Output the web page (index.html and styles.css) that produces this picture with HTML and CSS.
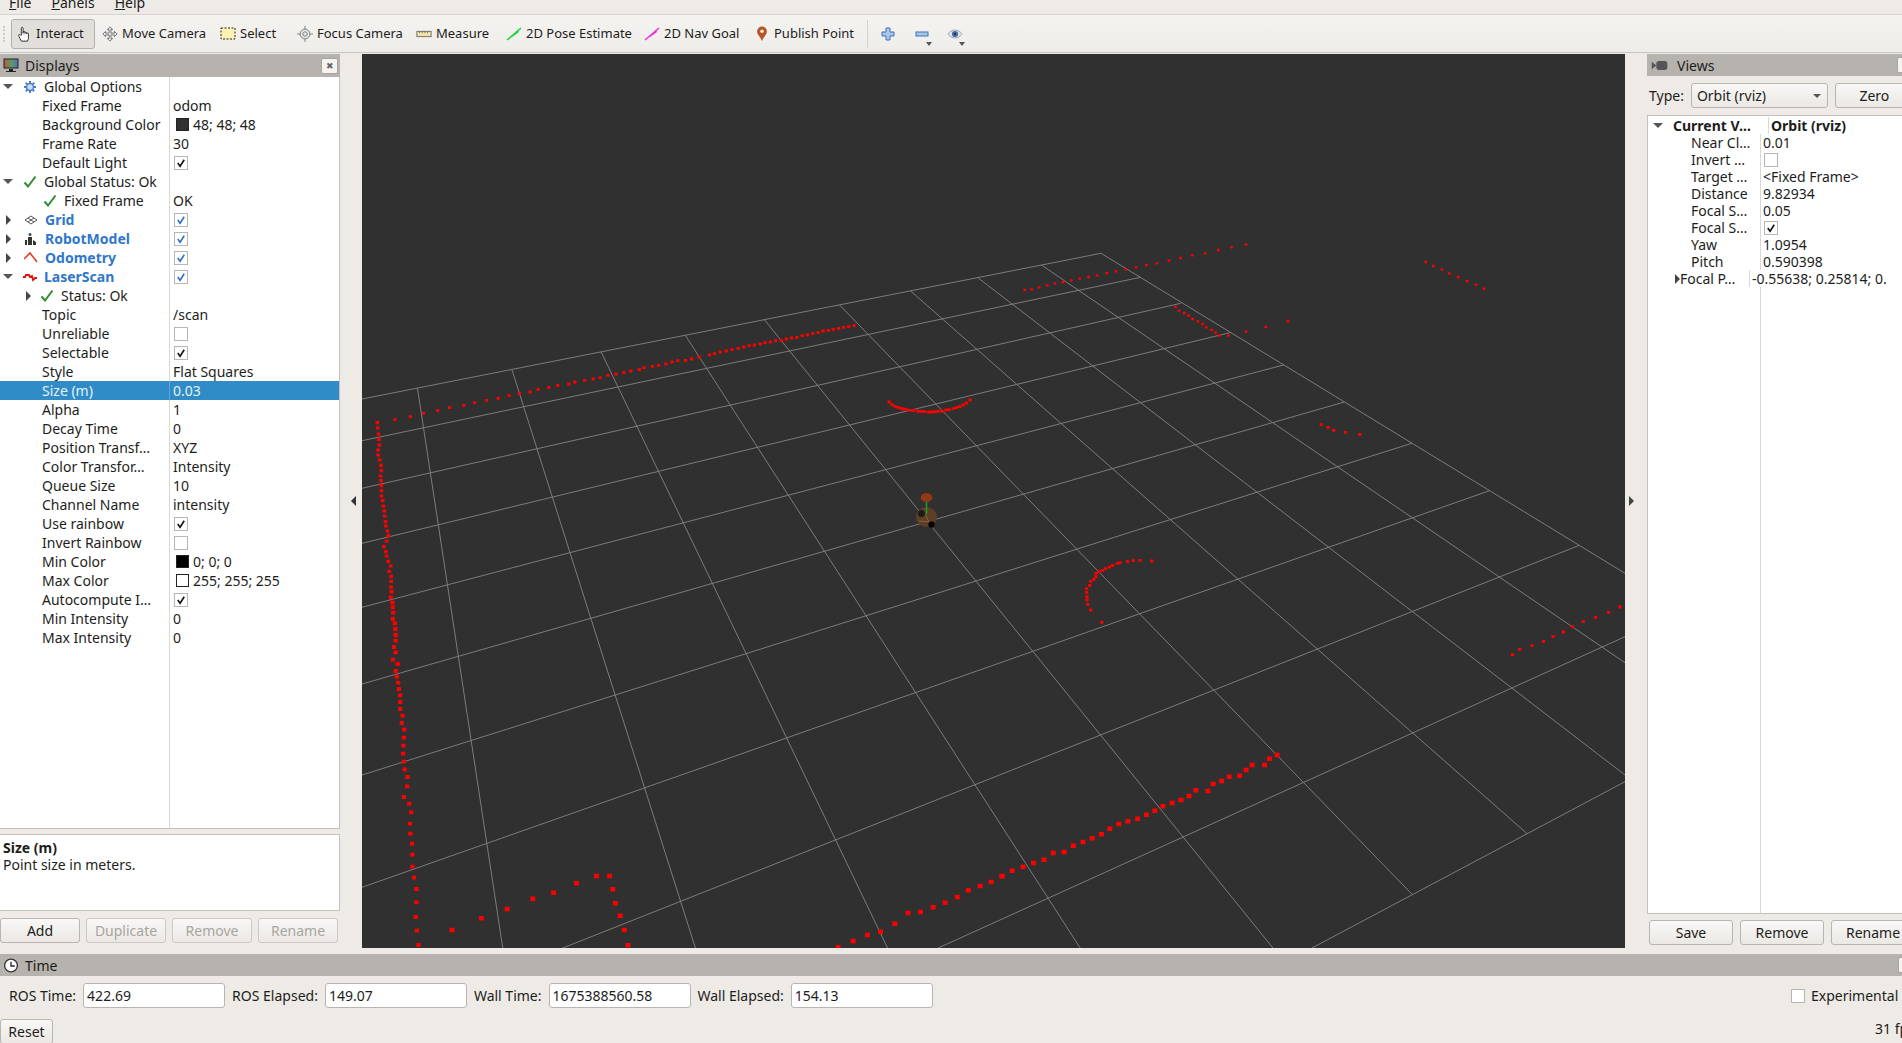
FILE: index.html
```html
<!DOCTYPE html>
<html lang="en">
<head>
<meta charset="utf-8">
<title>RViz</title>
<link rel="stylesheet" href="styles.css">
</head>
<body>
<svg class="defs" width="0" height="0" aria-hidden="true">
  <defs>
    <symbol id="i-check" viewBox="0 0 14 14"><path d="M1.5 7.5l3.5 4L12.5 1.5" fill="none" stroke="#2e8b2e" stroke-width="2"/></symbol>
    <symbol id="i-tick" viewBox="0 0 13 13"><path d="M3 6.5l2.5 3.5L10 3" fill="none" stroke="currentColor" stroke-width="1.7"/></symbol>
  </defs>
</svg>
<div class="app">
  <div class="menubar"><span class="menu"><u>F</u>ile</span><span class="menu"><u>P</u>anels</span><span class="menu"><u>H</u>elp</span></div>

  <div class="toolbar">
    <div class="grip"></div>
    <div class="tool active">
      <svg class="ticon" viewBox="0 0 16 18"><path d="M5 10V2.5a1 1 0 0 1 2 0V8M7 8V7a1 1 0 0 1 2 0v1.500M9 8a1 1 0 0 1 2 0v1M11 9a1 1 0 0 1 2 0v5l-1 3H5l-3-6c-.6-1.400 1-2 2-1l1 1" fill="#fff" stroke="#222" stroke-width="1"/></svg>
      <span>Interact</span></div>
    <div class="tool">
      <svg class="ticon" viewBox="0 0 18 18"><path d="M9 1l3 3h-2v4h4V6l3 3-3 3v-2h-4v4h2l-3 3-3-3h2v-4H4v2L1 9l3-3v2h4V4H6z" fill="#f4f4f2" stroke="#666"/></svg>
      <span>Move Camera</span></div>
    <div class="tool">
      <svg class="ticon" viewBox="0 0 16 16"><rect x="1" y="2" width="14" height="11" fill="#fdf3b0" stroke="#222" stroke-dasharray="2 1.500"/></svg>
      <span>Select</span></div>
    <div class="tool">
      <svg class="ticon" viewBox="0 0 18 18"><path d="M9 0v18M0 9h18" stroke="#777"/><circle cx="9" cy="9" r="5.500" fill="#e6e6e4" stroke="#777"/><circle cx="9" cy="9" r="2.500" fill="none" stroke="#777"/></svg>
      <span>Focus Camera</span></div>
    <div class="tool">
      <svg class="ticon" viewBox="0 0 18 18"><rect x="1" y="6" width="16" height="6" fill="#efe3a8" stroke="#666"/><path d="M4 6v2M7 6v2M10 6v2M13 6v2" stroke="#666"/></svg>
      <span>Measure</span></div>
    <div class="tool">
      <svg class="ticon" viewBox="0 0 16 16"><path d="M1 14L15 2" stroke="#1fd13f" stroke-width="1.500"/><path d="M5 12L12 4l1 2z" fill="#1fd13f"/></svg>
      <span>2D Pose Estimate</span></div>
    <div class="tool">
      <svg class="ticon" viewBox="0 0 16 16"><path d="M1 14L15 2" stroke="#ef2fd8" stroke-width="1.500"/><path d="M5 12L12 4l1 2z" fill="#ef2fd8"/></svg>
      <span>2D Nav Goal</span></div>
    <div class="tool">
      <svg class="ticon" viewBox="0 0 16 18"><path d="M8 17C6 12 2.500 10 2.500 6a5.500 5.500 0 0 1 11 0c0 4-3.500 6-5.500 11z" fill="#b5562a"/><circle cx="8" cy="6" r="2" fill="#f3e3d8"/></svg>
      <span>Publish Point</span></div>
    <div class="tsep"></div>
    <div class="zoomtool">
      <svg class="zicon" viewBox="0 0 14 14"><path d="M5 1h4v4h4v4H9v4H5V9H1V5h4z" fill="#a9c6e8" stroke="#3f74b3"/></svg>
    </div>
    <div class="zoomtool">
      <svg class="zicon" viewBox="0 0 14 14"><rect x="1" y="5" width="12" height="4" fill="#a9c6e8" stroke="#3f74b3"/></svg>
      <span class="drop"></span>
    </div>
    <div class="zoomtool">
      <svg class="zicon" viewBox="0 0 18 14"><path d="M1 7c4-6 12-6 16 0-4 6-12 6-16 0z" fill="#dfe3e8" stroke="#9aa3ad"/><circle cx="9" cy="7" r="3.500" fill="#4a6fa8"/><circle cx="9" cy="7" r="1.300" fill="#1c2c48"/></svg>
      <span class="drop"></span>
    </div>
  </div>

  <div class="main">
    <section class="dock left">
      <header class="dockhead">
        <svg class="dockicon" viewBox="0 0 16 15"><defs><linearGradient id="scr" x1="0" x2="1"><stop offset="0" stop-color="#c0504d"/><stop offset=".5" stop-color="#5aa05a"/><stop offset="1" stop-color="#5a6ac0"/></linearGradient></defs><rect x="1" y="1" width="14" height="9" fill="url(#scr)" stroke="#222"/><path d="M6 11h4v2H6zM3 13h10v1H3z" fill="#222"/></svg>
        <span class="dockname">Displays</span>
        <span class="closebtn">✖</span>
      </header>
      <div class="tree">
        <div class="row"><i class="tri down"></i><svg class="ricon" viewBox="0 0 14 14"><path d="M7 1v2M7 11v2M1 7h2M11 7h2M2.800 2.800l1.400 1.400M9.800 9.800l1.400 1.400M2.800 11.200l1.400-1.400M9.800 4.200l1.400-1.400" stroke="#4a7fd0" stroke-width="2"/><circle cx="7" cy="7" r="3.500" fill="#cfdcf2" stroke="#4a7fd0" stroke-width="1.500"/></svg><span class="name">Global Options</span><span class="val"></span></div>
        <div class="row"><span class="name d1">Fixed Frame</span><span class="val">odom</span></div>
        <div class="row"><span class="name d1">Background Color</span><span class="val"><i class="swatch dark"></i>48; 48; 48</span></div>
        <div class="row"><span class="name d1">Frame Rate</span><span class="val">30</span></div>
        <div class="row"><span class="name d1">Default Light</span><span class="val"><i class="cb"><svg><use href="#i-tick"/></svg></i></span></div>
        <div class="row"><i class="tri down"></i><svg class="ricon"><use href="#i-check"/></svg><span class="name">Global Status: Ok</span><span class="val"></span></div>
        <div class="row"><svg class="ricon sub"><use href="#i-check"/></svg><span class="name">Fixed Frame</span><span class="val">OK</span></div>
        <div class="row"><i class="tri right"></i><svg class="ricon" viewBox="0 0 14 14"><path d="M1 7l6-4 6 4-6 4zM4 5l6 4M10 5L4 9" fill="none" stroke="#555"/></svg><span class="name blue">Grid</span><span class="val"><i class="cb on"><svg><use href="#i-tick"/></svg></i></span></div>
        <div class="row"><i class="tri right"></i><svg class="ricon" viewBox="0 0 14 14"><circle cx="6" cy="2.500" r="1.500" fill="#2a4a7a"/><path d="M4 5h4v8H4zM1 8h2v5H1zM9 8l3 2v3H9z" fill="#333"/></svg><span class="name blue">RobotModel</span><span class="val"><i class="cb on"><svg><use href="#i-tick"/></svg></i></span></div>
        <div class="row"><i class="tri right"></i><svg class="ricon" viewBox="0 0 14 14"><path d="M0 8L6 2l7 9" fill="none" stroke="#e8321e" stroke-width="1.500"/></svg><span class="name blue">Odometry</span><span class="val"><i class="cb on"><svg><use href="#i-tick"/></svg></i></span></div>
        <div class="row"><i class="tri down"></i><svg class="ricon" viewBox="0 0 14 14"><path d="M0 7h2l1-2 3 0 1 2 2-1 1 4 2-2h2" fill="none" stroke="#e01010" stroke-width="1.800"/></svg><span class="name blue">LaserScan</span><span class="val"><i class="cb on"><svg><use href="#i-tick"/></svg></i></span></div>
        <div class="row"><i class="tri right sub"></i><svg class="ricon subt"><use href="#i-check"/></svg><span class="name">Status: Ok</span><span class="val"></span></div>
        <div class="row"><span class="name d1">Topic</span><span class="val">/scan</span></div>
        <div class="row"><span class="name d1">Unreliable</span><span class="val"><i class="cb"></i></span></div>
        <div class="row"><span class="name d1">Selectable</span><span class="val"><i class="cb"><svg><use href="#i-tick"/></svg></i></span></div>
        <div class="row"><span class="name d1">Style</span><span class="val">Flat Squares</span></div>
        <div class="row selected"><span class="name d1">Size (m)</span><span class="val">0.03</span></div>
        <div class="row"><span class="name d1">Alpha</span><span class="val">1</span></div>
        <div class="row"><span class="name d1">Decay Time</span><span class="val">0</span></div>
        <div class="row"><span class="name d1">Position Transf…</span><span class="val">XYZ</span></div>
        <div class="row"><span class="name d1">Color Transfor…</span><span class="val">Intensity</span></div>
        <div class="row"><span class="name d1">Queue Size</span><span class="val">10</span></div>
        <div class="row"><span class="name d1">Channel Name</span><span class="val">intensity</span></div>
        <div class="row"><span class="name d1">Use rainbow</span><span class="val"><i class="cb"><svg><use href="#i-tick"/></svg></i></span></div>
        <div class="row"><span class="name d1">Invert Rainbow</span><span class="val"><i class="cb"></i></span></div>
        <div class="row"><span class="name d1">Min Color</span><span class="val"><i class="swatch black"></i>0; 0; 0</span></div>
        <div class="row"><span class="name d1">Max Color</span><span class="val"><i class="swatch white"></i>255; 255; 255</span></div>
        <div class="row"><span class="name d1">Autocompute I…</span><span class="val"><i class="cb"><svg><use href="#i-tick"/></svg></i></span></div>
        <div class="row"><span class="name d1">Min Intensity</span><span class="val">0</span></div>
        <div class="row"><span class="name d1">Max Intensity</span><span class="val">0</span></div>
        <div class="fill"><span class="fillname"></span><span class="fillval"></span></div>
      </div>
      <div class="splitdots"></div>
      <div class="desc"><b>Size (m)</b><br>Point size in meters.</div>
      <div class="btnrow">
        <button class="btn">Add</button>
        <button class="btn off">Duplicate</button>
        <button class="btn off">Remove</button>
        <button class="btn off">Rename</button>
      </div>
    </section>

    <div class="handle lh"><i class="tri leftward"></i></div>

    <div class="viewport">
      <svg class="scene" viewBox="362 54 1263 894" width="1263" height="894">
        <g class="grid">
          <path d="M362 399L1101 253.300M362 440.700L1140.600 277.300M362 488.300L1180.800 303.300M362 543.300L1229.800 332.700M362 607.300L1283.600 365M362 684L1344.300 402M362 775L1411.800 443.300M362 887.300L1489.400 490.700M562 948.300L1579.400 545.300M937.500 948.300L1625 636.700M1311.400 948.300L1625 781.700"/>
          <path d="M417.500 388.300L502.800 948.300M511.800 369.300L695.500 948.300M601.200 352L887.700 948.300M685.300 335.300L1080.400 948.300M764 319.300L1273.200 948.300M839.600 305L1411.800 894M911 291.300L1526.700 833.300M978.300 278L1625 775M1041.400 265L1625 662.700M1101 253.300L1625 573.300"/>
        </g>
        <g class="dots s3" transform="translate(362 230) scale(.40816 .33333)">
          <path d="M80 569h1M118 560h1M150 550h1M185 542h1M214 533h1M249 526h1M275 518h1M305 511h1M333 505h1M360 497h1M385 491h1M411 486h1M431 478h1M457 472h1M479 466h1M506 462h1M521 456h1M545 451h1M566 447h1M583 443h1M602 436h1M622 432h1M641 428h1M658 423h1M679 419h1M690 413h1M711 409h1M726 406h1M744 402h1M759 396h1M773 392h1M792 391h1M807 387h1M825 381h1M851 375h1M863 371h1M877 366h1M892 363h1M906 359h1M921 355h1M935 351h1M948 347h1M961 345h1M975 342h1M987 338h1M1000 336h1M1013 332h1M1027 332h1M1039 327h1M1052 324h1M1065 322h1M1078 317h1M1091 315h1M1104 311h1M1117 308h1M1129 303h1M1142 301h1M1154 298h1M1167 295h1M1179 292h1M1192 290h1M1205 287h1M1291 516h1M1298 524h1M1305 529h1M1312 532h1M1320 535h1M1327 537h1M1335 539h1M1345 541h1M1352 541h1M1362 544h1M1370 544h1M1378 545h1M1388 546h1M1395 546h1M1403 545h1M1411 544h1M1420 543h1M1430 540h1M1438 539h1M1448 536h1M1456 533h1M1464 530h1M1472 525h1M1480 519h1M1489 510h1"/>
        </g>
        <g class="dots s35" transform="translate(362 230) scale(.40816 .33333)">
          <path d="M37 578h1M38 594h1M40 612h1M41 628h1M42 645h1M39 660h1M39 675h1M43 690h1M46 706h1M47 722h1M45 738h1M46 752h1M47 767h1M47 782h1M47 798h1M50 812h1M52 828h1M54 843h1M55 858h1M57 875h1M58 888h1M62 903h1M64 917h1M60 933h1M53 950h1M58 965h1M60 978h1M64 994h1M70 1008h1M66 1024h1M71 1039h1M71 1054h1M71 1071h1"/>
        </g>
        <g class="dots s25" transform="translate(1000 230) scale(.40179 .33333)">
          <path d="M61 180h1M78 178h1M97 172h1M117 166h1M136 160h1M156 156h1M177 151h1M198 146h1M220 141h1M241 136h1M265 129h1M288 124h1M313 118h1M338 112h1M364 105h1M390 100h1M420 92h1M449 84h1M478 76h1M510 70h1M543 60h1M576 52h1M612 44h1M1059 96h1M1078 108h1M1099 118h1M1118 130h1M1140 141h1M1162 153h1M1184 164h1M1204 176h1M436 230h1M445 242h1M458 249h1M469 257h1M479 267h1M492 274h1M504 282h1M513 292h1M526 300h1M536 308h1M545 317h1M568 317h1M612 305h1M661 291h1M716 273h1"/>
        </g>
        <g class="dots s3" transform="translate(1000 230) scale(.40179 .33333)">
          <path d="M799 584h1M816 592h1M830 601h1M859 607h1M895 613h1M377 993h1M348 991h1M331 992h1M317 994h1M298 998h1M292 1000h1M280 1006h1M272 1011h1M262 1016h1M255 1021h1M246 1025h1M238 1030h1M238 1040h1M233 1048h1M225 1054h1M223 1066h1M215 1076h1"/>
        </g>
        <g class="dots s4" transform="translate(362 590) scale(.40816 .33333)">
          <path d="M72 5h1M70 22h1M74 38h1M75 52h1M76 68h1M75 87h1M80 100h1M81 117h1M82 135h1M82 152h1M78 171h1M82 187h1M75 209h1M87 222h1M82 243h1M85 260h1M88 278h1M90 297h1M93 316h1M93 336h1M93 357h1M99 377h1M97 399h1M103 419h1M102 443h1M101 467h1M100 491h1M102 515h1M104 538h1M111 561h1M110 589h1M102 621h1M115 641h1M120 667h1M117 701h1M118 731h1M122 761h1M123 794h1M123 830h1M127 863h1M133 897h1M133 937h1M131 981h1M134 1022h1M138 1065h1"/>
        </g>
        <g class="dots s5" transform="translate(362 590) scale(.40816 .33333)">
          <path d="M220 1020h1M292 985h1M355 957h1M418 926h1M469 908h1M525 880h1M574 858h1M606 858h1M614 898h1M620 940h1M632 977h1M642 1020h1M651 1066h1M1166 1072h1M1203 1053h1M1238 1035h1M1270 1025h1M1305 1001h1M1337 969h1M1368 966h1M1399 952h1M1428 938h1M1458 921h1M1485 901h1M1514 888h1M1541 876h1M1567 858h1"/>
        </g>
        <g class="dots s3" transform="translate(1000 590) scale(.40179 .33333)">
          <path d="M215 7h1M216 20h1M216 30h1M218 43h1M225 60h1M253 97h1M1275 194h1M1293 178h1M1324 167h1M1352 154h1M1376 140h1M1402 126h1M1424 110h1M1451 95h1M1482 82h1M1514 67h1M1543 51h1"/>
        </g>
        <g class="dots s5" transform="translate(1000 590) scale(.40179 .33333)">
          <path d="M689 495h1M670 506h1M658 525h1M627 525h1M612 540h1M596 557h1M570 560h1M551 573h1M530 582h1M517 603h1M487 601h1M470 618h1M450 630h1M428 639h1M405 649h1M385 662h1M364 674h1M342 686h1M318 694h1M295 702h1M273 716h1M252 733h1M229 745h1M206 756h1M182 767h1M159 786h1M132 789h1M109 809h1M83 819h1M57 831h1M30 842h1M5 859h1"/>
        </g>
        <g class="robot">
          <ellipse cx="926.500" cy="517" rx="10.500" ry="10" fill="#5c3f24"/>
          <path d="M919 521l14 1M925 514l5 10" stroke="#8a6238"/>
          <circle cx="921.500" cy="513.500" r="3.500" fill="#1d1a18"/>
          <circle cx="931.500" cy="524.500" r="3.200" fill="#050505"/>
          <path d="M926.500 500v14" stroke="#1ca02c" stroke-width="1.500"/>
          <ellipse cx="926.500" cy="497.500" rx="5.800" ry="4.500" fill="#8f3a12"/>
        </g>
      </svg>
    </div>

    <div class="handle rh"><i class="tri right"></i></div>

    <section class="dock views">
      <header class="dockhead short">
        <svg class="dockicon wide" viewBox="0 0 18 12"><path d="M0 2l5 4-5 4z" fill="#555"/><rect x="5" y="1" width="12" height="10" rx="3" fill="#555"/></svg>
        <span class="dockname">Views</span>
        <span class="closebtn ghost"></span>
      </header>
      <div class="typerow">
        <span>Type:</span>
        <div class="combo">Orbit (rviz)<i class="tri down small"></i></div>
        <button class="btn zero">Zero</button>
      </div>
      <div class="vtree">
        <div class="vrow head"><i class="tri down vtop"></i><span class="vname strong">Current V…</span><span class="vval">Orbit (rviz)</span></div>
        <div class="vrow"><span class="vname">Near Cl…</span><span class="vval">0.01</span></div>
        <div class="vrow"><span class="vname">Invert …</span><span class="vval"><i class="cb"></i></span></div>
        <div class="vrow"><span class="vname">Target …</span><span class="vval">&lt;Fixed Frame&gt;</span></div>
        <div class="vrow"><span class="vname">Distance</span><span class="vval">9.82934</span></div>
        <div class="vrow"><span class="vname">Focal S…</span><span class="vval">0.05</span></div>
        <div class="vrow"><span class="vname">Focal S…</span><span class="vval"><i class="cb"><svg><use href="#i-tick"/></svg></i></span></div>
        <div class="vrow"><span class="vname">Yaw</span><span class="vval">1.0954</span></div>
        <div class="vrow"><span class="vname">Pitch</span><span class="vval">0.590398</span></div>
        <div class="vrow"><i class="tri right vsub"></i><span class="vname">Focal P…</span><span class="vval">-0.55638; 0.25814; 0.</span></div>
        <div class="vfill"><span></span></div>
      </div>
      <div class="vbtns">
        <button class="btn">Save</button>
        <button class="btn">Remove</button>
        <button class="btn">Rename</button>
      </div>
    </section>
  </div>

  <section class="timedock">
    <header class="dockhead timehead">
      <svg class="dockicon" viewBox="0 0 16 16"><circle cx="8" cy="8" r="6.800" fill="#fff" stroke="#333" stroke-width="1.400"/><path d="M8 4v4.500h4" fill="none" stroke="#222" stroke-width="1.400"/></svg>
      <span class="dockname">Time</span>
      <span class="closebtn ghost edge"></span>
    </header>
    <div class="timerow">
      <span class="tlabel">ROS Time:</span><div class="field">422.69</div>
      <span class="tlabel">ROS Elapsed:</span><div class="field">149.07</div>
      <span class="tlabel">Wall Time:</span><div class="field">1675388560.58</div>
      <span class="tlabel">Wall Elapsed:</span><div class="field">154.13</div>
      <span class="exp"><i class="cb"></i>Experimental</span>
    </div>
    <div class="resetrow">
      <button class="btn reset">Reset</button>
      <span class="fps">31 fps</span>
    </div>
  </section>
</div>
</body>
</html>
```
FILE: styles.css
```css
* { box-sizing: border-box; }
html, body { margin: 0; padding: 0; }
body {
  width: 1902px;
  height: 1043px;
  overflow: hidden;
  background: #eeebe7;
  color: #1d1d1b;
  font: 14px/19px "Noto Sans", sans-serif;
}
.defs { position: absolute; }
.app { width: 1902px; height: 1043px; display: flex; flex-direction: column; overflow: hidden; }
i { font-style: normal; display: inline-block; }

.menubar {
  height: 15px;
  display: flex;
  align-items: flex-end;
  padding-left: 9px;
  gap: 20px;
  border-bottom: 1px solid #d6d2cd;
  overflow: hidden;
}
.menu { line-height: 19px; height: 19px; margin-bottom: 2px; flex: none; }

.toolbar {
  height: 38px;
  flex: none;
  display: grid;
  grid-template-columns: 11px 84px 2px 118px 77px 119px 90px 138px 110px 118px 1px 19px 33px 33px 33px;
  grid-template-columns: 11px 86px 118px 77px 119px 90px 138px 110px 118px 1px 36px 33px 33px;
  align-items: center;
  background: linear-gradient(#f5f3f0, #efedea);
  border-bottom: 1px solid #c8c4bf;
  margin-bottom: 1px;
  font-size: 13px;
}
.grip { height: 16px; margin-left: 3px; width: 4px; border-left: 2px dotted #cfcbc6; }
.tool { display: flex; align-items: center; gap: 4px; height: 30px; padding-left: 5px; white-space: nowrap; }
.tool.active {
  width: 84px;
  background: #e2dfdb;
  border: 1px solid #b3afaa;
  border-radius: 3px;
  padding-left: 4px;
}
.ticon { width: 16px; height: 16px; flex: none; }
.tsep { height: 28px; width: 1px; background: #d5d1cc; }
.zoomtool { position: relative; display: flex; align-items: center; justify-content: center; height: 30px; padding-left: 3px; }
.zicon { width: 14px; height: 14px; }
.zoomtool:nth-last-child(1) .zicon { width: 16px; }
.drop {
  position: absolute;
  right: 5px;
  bottom: 3px;
  border: 3px solid transparent;
  border-top: 4px solid #555;
  border-bottom: 0;
  width: 0;
  height: 0;
}

.main { height: 894px; flex: none; display: flex; }
.dock { display: flex; flex-direction: column; flex: none; }
.left { width: 340px; }
.dockhead {
  height: 23px;
  flex: none;
  display: flex;
  align-items: center;
  gap: 6px;
  padding: 0 2px 0 3px;
  background: #b6b2ae;
}
.dockhead.short { height: 22px; }
.dockname { flex: 1; }
.dockicon { width: 16px; height: 15px; flex: none; }
.dockicon.wide { width: 18px; height: 11px; margin-right: 2px; margin-left: 1px; }
.closebtn {
  width: 17px;
  height: 16px;
  flex: none;
  background: #f6f4f1;
  border: 1px solid #a9a5a0;
  border-radius: 2px;
  font-size: 9px;
  line-height: 14px;
  text-align: center;
  color: #666;
}
.closebtn.ghost { margin-right: -14px; }
.closebtn.edge { margin-right: -15px; }

.tree {
  flex: 1;
  min-height: 0;
  display: flex;
  flex-direction: column;
  background: #fff;
  border-right: 1px solid #c4c0bb;
  border-bottom: 1px solid #c4c0bb;
}
.row {
  height: 19px;
  flex: none;
  display: flex;
  align-items: center;
  white-space: nowrap;
}
.name { flex: 1; min-width: 0; overflow: hidden; margin-right: 0; }
.name.d1 { padding-left: 42px; }
.name.blue { font-weight: 700; color: #2f77c9; }
.val {
  width: 170px;
  flex: none;
  height: 19px;
  padding-left: 3px;
  border-left: 1px solid #dad8d5;
  display: flex;
  align-items: center;
}
.row.selected { background: #308cc6; color: #e6f1f8; }
.row.selected .val { border-left-color: #5fa5d2; }
.fill { flex: 1; display: flex; }
.fillname { flex: 1; }
.fillval { width: 170px; border-left: 1px solid #dad8d5; }

.tri { width: 0; height: 0; border-style: solid; border-color: transparent; flex: none; }
.tri.down { border-width: 5px 5px 0; border-top-color: #555; margin: 0 7px 0 3px; }
.tri.right { border-width: 5px 0 5px 5px; border-left-color: #444; margin: 0 10px 0 6px; }
.tri.right.sub { margin: 0 6px 0 26px; }
.tri.leftward { border-width: 5px 5px 5px 0; border-right-color: #333; }
.tri.small { border-width: 4px 4px 0; margin: 0; }
.ricon { width: 14px; height: 14px; flex: none; margin-left: 3px; margin-right: 7px; }
.ricon.sub { margin-left: 43px; margin-right: 7px; }
.ricon.subt { margin-left: 3px; margin-right: 7px; }

.cb {
  width: 14px;
  height: 14px;
  margin-left: 1px;
  background: #fff;
  border: 1px solid #b9b5b0;
  color: #111;
  flex: none;
  display: block;
}
.cb svg { width: 12px; height: 12px; display: block; }
.cb.on { color: #2f6fc4; }
.swatch { width: 13px; height: 13px; margin: 0 4px 0 3px; border: 1px solid #222; flex: none; }
.swatch.dark { background: #303030; }
.swatch.black { background: #000; }
.swatch.white { background: #fff; }

.splitdots { height: 5px; flex: none; }
.desc {
  height: 77px;
  flex: none;
  padding: 4px 3px;
  line-height: 17px;
  background: #fff;
  border: 1px solid #c4c0bb;
  border-left: 0;
}
.btnrow { display: flex; gap: 6px; padding: 7px 2px 5px 0; flex: none; }
.btnrow .btn { width: 80px; }
.btn {
  height: 25px;
  padding: 0;
  font: inherit;
  color: inherit;
  background: linear-gradient(#f9f8f6, #ebe8e4);
  border: 1px solid #b9b5b0;
  border-radius: 3px;
}
.btn.off { color: #a8a5a1; border-color: #ccc9c5; }

.handle { width: 22px; flex: none; display: flex; align-items: center; }
.handle .tri { margin: 0; }
.lh { justify-content: flex-end; padding-right: 6px; padding-top: 0; }
.rh { justify-content: flex-start; padding-left: 4px; }

.viewport { width: 1263px; height: 894px; flex: none; background: #303030; overflow: hidden; }
.scene { display: block; }
.grid path { fill: none; stroke: #7c7c7c; stroke-width: 1; }
.dots path { fill: none; stroke: #f00; stroke-linecap: square; vector-effect: non-scaling-stroke; }
.s25 path { stroke-width: 2.300px; }
.s3 path { stroke-width: 2.800px; }
.s35 path { stroke-width: 3.200px; }
.s4 path { stroke-width: 3.800px; }
.s5 path { stroke-width: 4.500px; }

.views { width: 255px; }
.typerow { height: 39px; flex: none; display: flex; align-items: center; gap: 7px; padding-left: 2px; width: 290px; }
.combo {
  width: 137px;
  height: 25px;
  flex: none;
  display: flex;
  align-items: center;
  justify-content: space-between;
  padding: 0 6px 0 5px;
  background: linear-gradient(#f9f8f6, #ebe8e4);
  border: 1px solid #b9b5b0;
  border-radius: 3px;
}
.btn.zero { width: 79px; flex: none; }
.vtree {
  flex: 1;
  min-height: 0;
  width: 290px;
  display: flex;
  flex-direction: column;
  background: #fff;
  border: 1px solid #c4c0bb;
  padding-top: 1px;
}
.vrow { height: 17px; flex: none; display: flex; align-items: center; white-space: nowrap; }
.vname { width: 112px; flex: none; padding-left: 43px; }
.vrow.head .vname { padding-left: 0; width: 95px; }
.vrow.head .tri.vtop { margin: 0 10px 0 5px; }
.vname.strong { font-weight: 700; }
.tri.vsub { margin: 0 -11px 0 27px; }
.vrow .tri.vsub + .vname { width: 112px; flex: none; margin-left: 0; padding-left: 43px; margin-left: -32px; }
.vval { flex: 1; height: 17px; border-left: 1px solid #dad8d5; padding-left: 2px; display: flex; align-items: center; }
.vrow.head .vval { font-weight: 700; }
.vfill { flex: 1; }
.vfill span { display: block; height: 100%; width: 1px; margin-left: 112px; background: #dad8d5; }
.vbtns { display: flex; gap: 7px; padding: 6px 0 3px 2px; width: 290px; flex: none; }
.vbtns .btn { width: 84px; flex: none; }

.timedock { margin-top: 6px; flex: 1; display: flex; flex-direction: column; min-height: 0; }
.timehead { height: 22px; }
.timerow { display: flex; align-items: center; height: 25px; margin-top: 7px; padding-left: 9px; }
.tlabel { white-space: nowrap; margin-right: 7px; }
.field {
  width: 142px;
  height: 25px;
  flex: none;
  margin-right: 7px;
  padding: 0 2px 0 3px;
  line-height: 23px;
  background: #fff;
  border: 1px solid #b9b5b0;
  border-radius: 3px;
}
.exp { margin-left: auto; display: flex; align-items: center; gap: 6px; white-space: nowrap; width: 111px; flex: none; overflow: hidden; }
.exp .cb { margin: 0; }
.resetrow { display: flex; justify-content: space-between; align-items: center; height: 25px; margin-top: 11px; }
.btn.reset { width: 53px; }
.fps { width: 27px; white-space: nowrap; overflow: visible; padding-bottom: 6px; }
```
